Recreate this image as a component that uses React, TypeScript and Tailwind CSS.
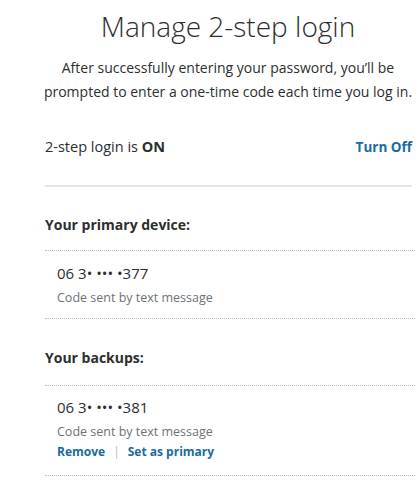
export default function App() {
  return (
    <div
      className="w-[419px] h-[480px] overflow-hidden bg-white text-[#2c2e2f]"
      style={{ fontFamily: '"Open Sans", "Liberation Sans", sans-serif' }}
    >
      <header className="pl-[37px] pt-[8px] text-center">
        <h1 className="text-[28px] font-light leading-[36px]">Manage 2-step login</h1>
        <p className="mt-[12px] whitespace-nowrap text-[14px] leading-[24px]">
          After successfully entering your password, you’ll be
          <br />
          prompted to enter a one-time code each time you log in.
        </p>
      </header>

      <main className="pl-[45px] pr-[7px]">
        <div className="mt-[32px] flex items-center justify-between pb-[27px] border-b-2 border-[#e5e6e7]">
          <span className="text-[14.5px] leading-[22px]">
            2-step login is <strong className="font-bold">ON</strong>
          </span>
          <a className="text-[13.5px] leading-[22px] font-bold text-[#1a6aa0]">Turn Off</a>
        </div>

        <section className="mt-[28px] mr-[-3px]">
          <h2 className="text-[14px] font-bold leading-[20px]">Your primary device:</h2>
          <div className="mt-[15px] border-y border-dotted border-[#bbbcbe] pl-[12px] pt-[11px] pb-[10px]">
            <div className="text-[15px] leading-[22px]">06 3• ••• •377</div>
            <div className="mt-[4px] text-[12.5px] leading-[20px] text-[#6c7378]">Code sent by text message</div>
          </div>
        </section>

        <section className="mt-[29px] mr-[-3px]">
          <h2 className="text-[14px] font-bold leading-[20px]">Your backups:</h2>
          <div className="mt-[17px] border-y border-dotted border-[#bbbcbe] pl-[12px] pt-[10px] pb-[13px]">
            <div className="text-[15px] leading-[22px]">06 3• ••• •381</div>
            <div className="mt-[4px] text-[12.5px] leading-[20px] text-[#6c7378]">Code sent by text message</div>
            <div className="flex items-center text-[12px] font-bold leading-[20px] text-[#1a6aa0]">
              <a>Remove</a>
              <span className="mx-[8px] font-normal text-[#b7bcbf]">|</span>
              <a>Set as primary</a>
            </div>
          </div>
        </section>
      </main>
    </div>
  );
}
